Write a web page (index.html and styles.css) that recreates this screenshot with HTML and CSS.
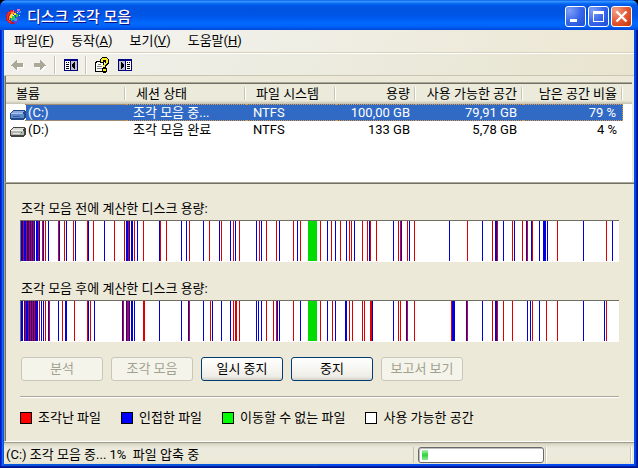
FILE: index.html
```html
<!DOCTYPE html>
<html lang="ko">
<head>
<meta charset="utf-8">
<title>디스크 조각 모음</title>
<link rel="stylesheet" href="styles.css">
</head>
<body>
<div class="window">
  <header class="titlebar">
    <svg class="app-icon" width="16" height="16" viewBox="0 0 16 16" shape-rendering="crispEdges" aria-hidden="true">
      <path fill="#b01848" d="M4 1h4v1h1v2H6v2H4v5h2v2h4v1H9v1H4v-1H2v-2H0V5h1V3h2V2h1z"/>
      <path fill="#f03020" d="M4 2h3v1H5v1H4v1H3v2H2v4h1v1h2v2H3v-1H2v-2H1V5h1V3h2z"/>
      <path fill="#ff9020" d="M5 3h3v2H6v2H4v4H3V7h1V5h1z"/>
      <path fill="#f8e830" d="M5 5h2v2H6v2H4V6h1zM8 4h2v2H8z"/>
      <path fill="#38c838" d="M6 7h3v2H8v2H6v1H5V9h1zM10 5h2v3h-2z"/>
      <path fill="#20b0e0" d="M8 9h3v3H8zM14 2h1v2h-2V3h1z"/>
      <path fill="#7038d0" d="M8 12h4v1h-1v1H8zM11 8h2v4h-2zM9 2h1v2H9z"/>
      <path fill="#f060c0" d="M11 0h3v2h-1v1h-1V2h-1zM7 1h1v2H7z"/>
      <path fill="#f0f0ff" d="M11 3h1v1h-1zM7 6h1v1H7zM13 6h1v1h-1z"/>
    </svg>
    <h1 class="title">디스크 조각 모음</h1>
    <div class="caption-buttons">
      <button class="caption" type="button" aria-label="최소화"><svg width="19" height="19" viewBox="0 0 19 19"><path fill="#fff" d="M4 12h7v3H4z"/></svg></button>
      <button class="caption" type="button" aria-label="최대화"><svg width="19" height="19" viewBox="0 0 19 19"><path fill="#fff" fill-rule="evenodd" d="M4 4h11v11H4zM5 7v7h9V7z"/></svg></button>
      <button class="caption close" type="button" aria-label="닫기"><svg width="19" height="19" viewBox="0 0 19 19"><path stroke="#fff" stroke-width="2.4" d="M4.500 4.500l10 10M14.500 4.500l-10 10"/></svg></button>
    </div>
  </header>

  <nav class="menubar">
    <a href="#file">파일(<u>F</u>)</a>
    <a href="#action">동작(<u>A</u>)</a>
    <a href="#view">보기(<u>V</u>)</a>
    <a href="#help">도움말(<u>H</u>)</a>
  </nav>

  <div class="toolbar">
    <button class="tool" type="button" aria-label="뒤로" disabled><svg width="16" height="16" viewBox="0 0 16 16" shape-rendering="crispEdges"><path fill="#fff" d="M3 9h1v1h1v1h1v1h1v2h2v-3h6V7h-1v3H8v3H7v-1H6v-1H5v-1H4V9z"/><path fill="#aca899" d="M2 8h1V7h1V6h1V5h1V4h1V3h1v3h6v4H8v3H7v-1H6v-1H5v-1H4V9H2z"/></svg></button>
    <button class="tool" type="button" aria-label="앞으로" disabled><svg width="16" height="16" viewBox="0 0 16 16" shape-rendering="crispEdges"><path fill="#fff" d="M3 10h6v1H3zM9 13h1v-1h1v-1h1v-1h1V9h2v1h-1v1h-1v1h-1v1h-1v1H9z"/><path fill="#aca899" d="M14 8h-1V7h-1V6h-1V5h-1V4H9V3H8v3H2v4h6v3h1v-1h1v-1h1v-1h1V9h2z"/></svg></button>
    <span class="tool-sep"></span>
    <button class="tool" type="button" aria-label="콘솔 트리 숨기기"><svg width="16" height="16" viewBox="0 0 16 16" shape-rendering="crispEdges"><path fill="#000080" d="M1 2h14v12H1z"/><path fill="#fff" d="M2 4h5v9H2z"/><path fill="#c0c0c0" d="M8 4h6v9H8z"/><path fill="#000" d="M3 5h1v1H3zM5 5h1v1H5zM3 7h3v1H3zM3 9h3v1H3zM3 11h3v1H3zM12 5v7h-1v-1h-1v-1H9V7h1V6h1V5z"/></svg></button>
    <span class="tool-sep"></span>
    <button class="tool" type="button" aria-label="도움말"><svg width="16" height="16" viewBox="0 0 16 16" shape-rendering="crispEdges"><path fill="#000" d="M2 4h8v11H1V5h1z"/><path fill="#fff" d="M3 5h6v9H2V6h1z"/><path fill="#808080" d="M4 7h3v1H4zM3 9h5v1H3zM3 11h5v1H3z"/><path fill="#000" d="M8 0h5v1h1v1h1v5h-1v1h-1v1h-1v2h1v4h-1v1H9v-1H8v-4h1V8h1V7h1V5h-1v1H6V2h1V1h1z"/><path fill="#ffec20" d="M8 1h5v1h1v4h-1v1h-1v1h-1v2H9V8h1V7h1V6h1V3H9v2H7V2h1zM9 12h3v2H9z"/></svg></button>
    <button class="tool" type="button" aria-label="작업 창 숨기기"><svg width="16" height="16" viewBox="0 0 16 16" shape-rendering="crispEdges"><path fill="#000080" d="M1 2h14v12H1z"/><path fill="#fff" d="M9 4h5v9H9z"/><path fill="#c0c0c0" d="M2 4h6v9H2z"/><path fill="#000" d="M10 5h1v1h-1zM12 5h1v1h-1zM10 7h3v1h-3zM10 9h3v1h-3zM10 11h3v1h-3zM4 5v7h1v-1h1v-1h1V7H6V6H5V5z"/></svg></button>
  </div>

  <section class="volumes">
    <table>
      <colgroup><col class="c-name"><col class="c-state"><col class="c-fs"><col class="c-size"><col class="c-free"><col class="c-pct"><col></colgroup>
      <thead>
        <tr><th>볼륨</th><th>세션 상태</th><th>파일 시스템</th><th class="num">용량</th><th class="num">사용 가능한 공간</th><th class="num">남은 공간 비율</th><th></th></tr>
      </thead>
      <tbody>
        <tr class="selected">
          <td class="name"><div class="name-box"><svg class="disk" width="16" height="10" viewBox="0 0 16 10" shape-rendering="crispEdges"><path fill="#24498a" d="M3 0h12v1h1v7h-1v1h-1v1H1V9H0V3h1V2h1V1h1z"/><path fill="#86a8dc" d="M3 1h11v1h-1v1H2V2h1z"/><path fill="#6088c8" d="M1 4h13v4H1z"/><path fill="#a8c4ee" d="M1 3h12v1H1z"/><path fill="#315ea8" d="M3 6h7v1H3z"/><path fill="#20c060" d="M11 5h1v1h-1z"/></svg><span class="label">(C:)</span></div></td>
          <td>조각 모음 중...</td><td>NTFS</td><td class="num">100,00 GB</td><td class="num">79,91 GB</td><td class="num last">79 %</td><td class="rest"></td>
        </tr>
        <tr>
          <td class="name"><div class="name-box"><svg class="disk" width="16" height="10" viewBox="0 0 16 10" shape-rendering="crispEdges"><path fill="#44443f" d="M3 0h12v1h1v7h-1v1h-1v1H1V9H0V3h1V2h1V1h1z"/><path fill="#d8d8d4" d="M3 1h11v1h-1v1H2V2h1z"/><path fill="#b4b4b0" d="M1 4h13v4H1z"/><path fill="#f4f4f2" d="M1 3h12v1H1z"/><path fill="#e6e6e2" d="M3 6h7v1H3z"/><path fill="#20a030" d="M11 5h1v1h-1z"/></svg><span class="label">(D:)</span></div></td>
          <td>조각 모음 완료</td><td>NTFS</td><td class="num">133 GB</td><td class="num">5,78 GB</td><td class="num last">4 %</td><td class="rest"></td>
        </tr>
      </tbody>
    </table>
  </section>

  <main class="analysis">
    <h2 class="chart-label">조각 모음 전에 계산한 디스크 용량:</h2>
    <svg class="chart" id="before" viewBox="0 0 598 40" preserveAspectRatio="none" shape-rendering="crispEdges"></svg>
    <h2 class="chart-label">조각 모음 후에 계산한 디스크 용량:</h2>
    <svg class="chart" id="after" viewBox="0 0 598 40" preserveAspectRatio="none" shape-rendering="crispEdges"></svg>

    <div class="actions">
      <button class="push" type="button" disabled>분석</button>
      <button class="push" type="button" disabled>조각 모음</button>
      <button class="push" type="button">일시 중지</button>
      <button class="push" type="button">중지</button>
      <button class="push" type="button" disabled>보고서 보기</button>
    </div>

    <hr class="rule">

    <ul class="legend">
      <li><span class="swatch fragmented"></span>조각난 파일</li>
      <li><span class="swatch contiguous"></span>인접한 파일</li>
      <li><span class="swatch unmovable"></span>이동할 수 없는 파일</li>
      <li><span class="swatch free"></span>사용 가능한 공간</li>
    </ul>
  </main>

  <footer class="statusbar">
    <div class="status-text">(C:) 조각 모음 중... 1%&nbsp; 파일 압축 중</div>
    <div class="status-progress"><div class="progress" role="progressbar" aria-label="진행률" aria-valuenow="1" aria-valuemin="0" aria-valuemax="100"><span class="block"></span></div></div>
    <div class="status-rest"></div>
  </footer>
</div>
<script src="charts.js"></script>
</body>
</html>
```
FILE: styles.css
```css
* { box-sizing: border-box; }

body {
  margin: 0;
  background: #000;
  color: #000;
  font: 13px/16px Roboto, "Noto Sans CJK KR", sans-serif;
}

button { font: inherit; padding: 0; }

.window {
  display: flex;
  flex-direction: column;
  min-height: 100vh;
  padding: 0 4px 4px;
  border-radius: 7px 7px 0 0;
  overflow: hidden;
  background: linear-gradient(90deg, #0019cf 0 1px, #0831d9 1px 2px, #166aee 2px 3px, #0855dd 3px 50%, #0048f0 50% calc(100% - 2px), #001ea0 calc(100% - 2px) calc(100% - 1px), #00138c calc(100% - 1px));
  box-shadow: inset 0 -1px #00138c, inset 0 -2px #001ea0;
}

/* Title bar */
.titlebar {
  display: flex;
  align-items: center;
  height: 30px;
  margin: 0 -4px;
  padding: 3px 6px 0;
  background: linear-gradient(#0058e6 0, #3a93ff 4%, #288eff 7%, #0a6cf4 11%, #0058e6 18%, #0053e1 30%, #0055e5 50%, #005ff5 66%, #026afe 76%, #0162f8 88%, #0046d8 100%);
}

.app-icon { flex: none; }

.title {
  flex: 1;
  margin: 0 0 0 5px;
  color: #fff;
  font-size: 15px;
  line-height: 20px;
  font-weight: 500;
  text-shadow: 1px 1px #0f1089;
}

.caption-buttons { display: flex; gap: 2px; }

.caption {
  width: 21px;
  height: 21px;
  border: 1px solid #fff;
  border-radius: 3px;
  background: radial-gradient(circle at 20% 20%, #7f9ff5, #3a68ea 50%, #1c4bd8);
}

.caption.close { background: radial-gradient(circle at 20% 20%, #f0a088, #e35b36 50%, #c83408); }
.caption svg { display: block; }

/* Menu and toolbar */
.menubar {
  display: flex;
  align-items: center;
  gap: 17px;
  height: 24px;
  padding: 0 10px 2px;
  border-bottom: 1px solid #fff;
  box-shadow: inset 0 -1px #d8d2bd;
  background: linear-gradient(100deg, #f5f4f2, #efeee4 50%, #ede7d3);
}

.menubar a { color: inherit; text-decoration: none; }

.toolbar {
  display: flex;
  align-items: center;
  height: 22px;
  padding: 0 1px;
  border-bottom: 1px solid #c9c5b2;
  background: linear-gradient(100deg, #f2f1ec, #ecebdf 50%, #e8e4cf);
}

.tool {
  width: 23px;
  height: 20px;
  border: 0;
  background: none;
  display: grid;
  place-items: center;
}

.tool-sep {
  width: 2px;
  height: 18px;
  margin: 0 3px;
  border-left: 1px solid #c5c2b0;
  border-right: 1px solid #fff;
}

/* Volume list */
.volumes {
  flex: 1;
  min-height: 106px;
  padding: 8px 0 0 1px;
  background: linear-gradient(#ece9d8 0 6px, #aca899 6px 7px, #716f64 7px 8px, #fff 8px);
  border-left: 1px solid #aca899;
  border-right: 2px solid #ece9d8;
  box-shadow: inset 1px 0 #716f64;
}

.volumes table {
  width: 100%;
  table-layout: fixed;
  border-collapse: separate;
  border-spacing: 0;
}

.c-name { width: 120px; }
.c-state { width: 120px; }
.c-fs { width: 90px; }
.c-size { width: 80px; }
.c-free { width: 107px; }
.c-pct { width: 100px; }

th {
  height: 20px;
  padding: 0 4px 1px 10px;
  font-weight: 400;
  text-align: left;
  white-space: nowrap;
  background:
    linear-gradient(#c7c5b2, #c7c5b2) calc(100% - 1px) 3px / 1px 13px no-repeat,
    linear-gradient(#fff, #fff) 100% 3px / 1px 13px no-repeat,
    linear-gradient(#ebeadb 0 17px, #e2decd 17px 18px, #d6d2c2 18px 19px, #cbc7b8 19px);
}

th:last-child { background: linear-gradient(#ebeadb 0 17px, #e2decd 17px 18px, #d6d2c2 18px 19px, #cbc7b8 19px); }

td {
  height: 17px;
  padding: 0 5px 0 7px;
  line-height: 15px;
  white-space: nowrap;
  border: 1px solid transparent;
  border-width: 1px 0;
}

th.num, td.num { padding-left: 0; padding-right: 6px; text-align: right; }
td.name { padding: 0 0 0 4px; }

.name-box { display: flex; align-items: flex-end; height: 15px; }
.name-box .label { flex: 1; padding-left: 2px; }

.selected td {
  color: #fff;
  background: #316ac5;
  border-color: #e09a40;
  border-style: dotted;
}

.selected td.name {
  background: linear-gradient(90deg, #fff 20px, #316ac5 20px) border-box;
  border-image: linear-gradient(90deg, transparent 20px, #a08a70 20px) 1;
}

.selected td.last { border-right: 1px dotted #e09a40; }
.selected td.rest { background: none; border-color: transparent; }

/* Analysis pane */
.analysis {
  padding: 17px 15px 17px 14px;
  background: #ece9d8;
  border-top: 1px solid #aca899;
  border-left: 1px solid #aca899;
  border-bottom: 1px solid #fff;
  box-shadow: inset 1px 1px #716f64;
}

.chart-label {
  margin: 0 0 2px 2px;
  font-size: 13px;
  line-height: 18px;
  font-weight: 400;
}

.chart {
  display: block;
  width: calc(100% - 1px);
  height: 42px;
  margin: 0 0 18px 1px;
  background: #fff;
  border-top: 1px solid #716f64;
  border-left: 1px solid #716f64;
  border-bottom: 1px solid #fff;
}

.actions { display: flex; gap: 8px; margin: -3px 0 0 2px; }

.push {
  width: 82px;
  height: 24px;
  padding-bottom: 1px;
  border: 1px solid #003c74;
  border-radius: 3px;
  color: #000;
  background: linear-gradient(#fff, #f4f3ee 60%, #ecebe5 85%, #d6d0c5);
}

.push:disabled {
  color: #a1a192;
  background: #f5f4ea;
  border-color: #c9c7ba;
}

.rule {
  height: 2px;
  margin: 15px 0 14px 1px;
  border: 0;
  border-top: 1px solid #aca899;
  border-bottom: 1px solid #fff;
}

.legend {
  display: flex;
  gap: 20px;
  margin: 0 0 0 1px;
  padding: 0;
  list-style: none;
}

.legend li { display: flex; align-items: center; gap: 6px; height: 12px; white-space: nowrap; }

.swatch { width: 12px; height: 12px; border: 1px solid #000; }
.fragmented { background: #f00; }
.contiguous { background: #00f; }
.unmovable { background: #0f0; }
.free { background: #fff; }

/* Status bar */
.statusbar {
  display: flex;
  align-items: center;
  height: 22px;
  padding: 2px 2px 0 0;
  border-top: 1px solid #9d9a8c;
  background: linear-gradient(#cfccba, #e6e3d3 3px, #edebdd 6px, #ece9d8 18px, #e4e0cd);
}

.status-text { flex: 1; padding-left: 2px; }

.status-progress, .status-rest {
  height: 16px;
  border-right: 1px solid #fff;
  box-shadow: inset -1px 0 #c9c5b2;
}

.status-progress { width: 134px; padding: 0 2px 0 4px; border-left: 1px solid #c9c5b2; }
.status-rest { width: 85px; }

.progress {
  height: 16px;
  padding: 2px 3px;
  border: 1px solid #686868;
  border-radius: 3px;
  background: #fff;
  box-shadow: inset 1px 1px #bebebe;
}

.block {
  display: block;
  width: 6px;
  height: 10px;
  background: linear-gradient(#b0f0b0, #2ed23a 50%, #8fe896);
}
```
FILE: charts.js
```javascript
// Each entry is colour + start, with an optional run length: "B110x2".
const colours = { R: "#dc0000", B: "#0000dc", G: "#00dc00" };

const disks = {
  before: "B0x2 R2 B3x2 R5 B6x2 R8 B9 R10 B11 R12 B13 B15x2 R17 B18 R21 B22 R24 B27 R37 B38 R43 B45 R52 B54 R66 B67 R72 B83 R93 R103 B105x2 R107 B108 B110x2 R113 B116 R122 B138 R139 R145 B160 B165 R168 B182 R188 B198 R200 B209 R212 B214 R218 B235 R238 B240 R245 R255 B258 R272 B276 R279 G287x9 R299 B306 R310 B314 R319 B325 R328 R330 B333 R341 R346 B348 R349 R355 B372 R377 R379 B380 R386 B388 R393 B428 R446 B461 R471 B474x2 R476 B482 R491 B493 R501 B505 R506 B510 R511 B518 B522x3 B526 R536 B562 R585 B591",
  after: "B0x2 B3 R4 B5x2 R7 B8 R9 B10 R11 B12 R13 B14x3 R18 B20 B22 R24 B27 R28 B37 R41 B44x2 R53 R66 B67 R69 B73 B101 R102 B105 R106x2 B108 B110x2 B113 R122x2 B138 B160 B167 R168 B182 R189 B191 B200 B209 R212 R214x2 R218 B235 B237 B240 R245 R252 R255 B256 B258 R272 B279 G287x9 R299 B306 R311 B314 B324x2 R328 R331 R341 R343 R349x2 B351 B372 R377 R379 B385 R386 R393 R430 B431x3 B445 R446 B461 R471 B474x2 R476 R482 R491 B506 B509 R511 B518 R525 R536 B562 B583 R585"
};

for (const [id, data] of Object.entries(disks)) {
  const chart = document.getElementById(id);
  for (const item of data.split(" ")) {
    const [start, run = "1"] = item.slice(1).split("x");
    const bar = document.createElementNS("http://www.w3.org/2000/svg", "rect");
    bar.setAttribute("x", start);
    bar.setAttribute("width", run);
    bar.setAttribute("height", "40");
    bar.setAttribute("fill", colours[item[0]]);
    chart.append(bar);
  }
}
```
